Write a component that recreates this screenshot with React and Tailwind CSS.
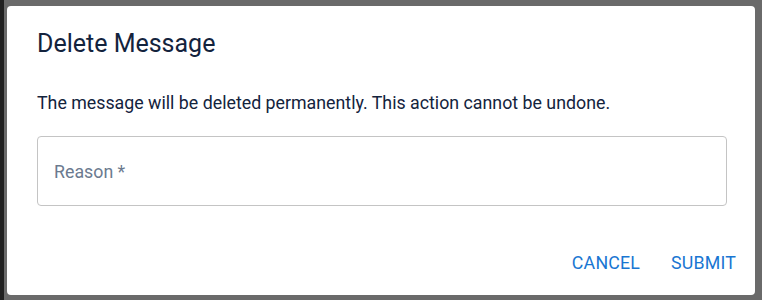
export default function App() {
  return (
    <div className="flex h-[300px] w-[762px] bg-[#6a6a6a] font-['Roboto',sans-serif]">
      <div className="w-[4px] shrink-0 bg-[#202020]" />
      <div className="flex flex-1 pl-[3px] pr-[7px] pt-[6px] pb-[5px]">
        <div className="flex flex-1 flex-col rounded-[4px] bg-white pl-[30px] pr-[19px]">
          <h2 className="pt-[22px] text-[25px] leading-[32px] text-[#13233d]">Delete Message</h2>
          <p className="mt-[31px] text-[17.8px] leading-[24px] text-[#13233d]">
            The message will be deleted permanently. This action cannot be undone.
          </p>
          <div className="mt-[21px] mr-[9px] flex h-[70px] items-center rounded-[4px] border border-[#c4c4c4] px-[16px]">
            <span className="pt-[2px] text-[17.8px] text-[#6b7a8f]">Reason *</span>
          </div>
          <div className="mt-auto mb-[18px] flex justify-end gap-[31px]">
            <button className="text-[17.8px] tracking-[0.01em] text-[#1976d2]">CANCEL</button>
            <button className="text-[17.8px] tracking-[0.01em] text-[#1976d2]">SUBMIT</button>
          </div>
        </div>
      </div>
    </div>
  );
}
